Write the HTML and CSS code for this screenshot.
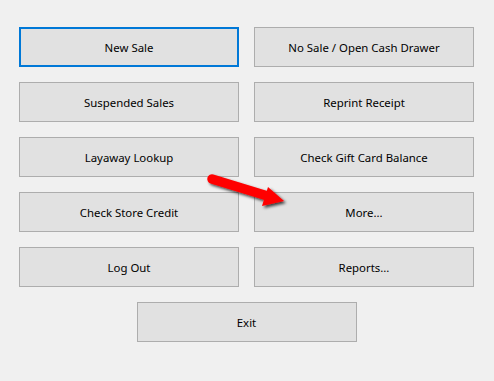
FILE: index.html
```html
<!DOCTYPE html>
<html>

<head>
    <title>Main Menu</title>
    <link rel="stylesheet" href="styles.css">
</head>

<body>
    <div class="menu">
        <button class="menu_btn focused">New Sale</button>
        <button class="menu_btn">No Sale / Open Cash Drawer</button>
        <button class="menu_btn">Suspended Sales</button>
        <button class="menu_btn">Reprint Receipt</button>
        <button class="menu_btn">Layaway Lookup</button>
        <button class="menu_btn">Check Gift Card Balance</button>
        <button class="menu_btn">Check Store Credit</button>
        <button class="menu_btn">More...</button>
        <button class="menu_btn">Log Out</button>
        <button class="menu_btn">Reports...</button>
        <button class="menu_btn exit_btn">Exit</button>
    </div>

    <!-- red pointer arrow drawn over the buttons -->
    <svg class="pointer" width="494" height="381" viewBox="0 0 494 381">
        <defs>
            <filter id="shadow" x="-20%" y="-40%" width="140%" height="180%">
                <feDropShadow dx="2" dy="2" stdDeviation="1.5" flood-color="#000" flood-opacity="0.75"/>
            </filter>
        </defs>
        <g filter="url(#shadow)" fill="#ff0000">
            <line x1="212" y1="179" x2="266" y2="195.5" stroke="#ff0000" stroke-width="9.5" stroke-linecap="round"/>
            <polygon points="268,187 284,201 262,206"/>
        </g>
    </svg>
</body>

</html>
```

FILE: styles.css
```css
body {
    margin: 0;
    background-color: #f0f0f0;
    font-family: "Noto Sans", "Open Sans", sans-serif;
}

.menu {
    display: grid;
    grid-template-columns: 220px 220px;
    grid-auto-rows: 40px;
    column-gap: 15px;
    row-gap: 15px;
    padding: 27px 0 0 19px;
}

.menu_btn {
    font-family: inherit;
    font-size: 11.4px;
    color: #000;
    background-color: #e1e1e1;
    border: 1px solid #adadad;
    border-radius: 0;
    margin: 0;
    padding: 0;
}

.focused {
    border: 2px solid #0078d7;
}

.exit_btn {
    grid-column: 1 / -1;
    justify-self: center;
    width: 220px;
}

.pointer {
    position: absolute;
    left: 0;
    top: 0;
    pointer-events: none;
}
```
